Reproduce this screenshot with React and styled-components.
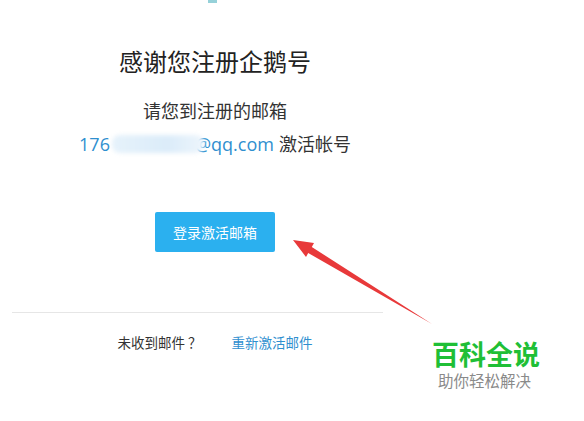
import React from "react"
import styled, { createGlobalStyle } from "styled-components"

const GlobalStyle = createGlobalStyle`
  html, body {
    margin: 0;
    padding: 0;
    background: #ffffff;
  }
  body {
    font-family: "Open Sans", "Noto Sans CJK SC", sans-serif;
    color: #333333;
  }
`

const Page = styled.div`
  position: relative;
  width: 584px;
  height: 421px;
  overflow: hidden;
  background: #ffffff;
`

const TopMark = styled.div`
  width: 9px;
  height: 3px;
  margin-left: 208px;
  background: #7cc6cf;
  opacity: 0.8;
`

const Column = styled.div`
  width: 430px;
  display: flex;
  flex-direction: column;
  align-items: center;
`

const Title = styled.h1`
  margin: 42px 0 0;
  font-family: "Noto Sans CJK SC", sans-serif;
  font-weight: 400;
  font-size: 24px;
  line-height: 32px;
  color: #222222;
`

const Subtitle = styled.p`
  margin: 20px 0 0;
  font-family: "Noto Sans CJK SC", sans-serif;
  font-size: 18px;
  line-height: 26px;
  color: #333333;
`

const EmailLine = styled.p`
  margin: 7px 0 0;
  font-size: 18px;
  line-height: 26px;
  color: #333333;
  white-space: nowrap;
`

const Email = styled.span`
  color: #2f8fcf;
  font-family: "Open Sans", sans-serif;
`

const Blur = styled.span`
  position: relative;
  z-index: 1;
  display: inline-block;
  width: 92px;
  height: 18px;
  margin: 0 -9px 0 2px;
  vertical-align: -2px;
  border-radius: 8px;
  background: linear-gradient(90deg, #e6f2fb, #dbecf9 60%, #edf5fc);
  filter: blur(2px);
`

const Action = styled.span`
  font-family: "Noto Sans CJK SC", sans-serif;
  margin-left: 5px;
`

const Button = styled.button`
  margin-top: 55px;
  width: 120px;
  height: 40px;
  border: none;
  border-radius: 2px;
  background: #2bb0ef;
  color: #ffffff;
  font-family: "Noto Sans CJK SC", sans-serif;
  font-size: 14px;
  cursor: pointer;
`

const Divider = styled.hr`
  align-self: stretch;
  margin: 60px 0 0 12px;
  border: none;
  border-top: 1px solid #e6e6e6;
`

const Footer = styled.div`
  margin-top: 19px;
  display: flex;
  gap: 30px;
  font-family: "Noto Sans CJK SC", sans-serif;
  font-size: 13.5px;
  line-height: 20px;
`

const FooterText = styled.span`
  color: ${({ link }) => (link ? "#2f8fcf" : "#333333")};
`

const Watermark = styled.div`
  position: absolute;
  left: 383px;
  top: 305px;
  width: 132px;
  height: 95px;
  background: #ffffff;
  box-sizing: border-box;
  padding: 35px 0 0 49px;
  font-family: "Noto Sans CJK SC", sans-serif;
`

const Brand = styled.div`
  font-size: 27px;
  font-weight: 700;
  line-height: 27px;
  color: #1fbf36;
  white-space: nowrap;
`

const Slogan = styled.div`
  font-size: 15.5px;
  line-height: 18px;
  margin-top: 4px;
  color: #8a8a8a;
  white-space: nowrap;
  margin-left: 6px;
`

const Arrow = styled.svg`
  position: absolute;
  left: 0;
  top: 0;
  pointer-events: none;
`

export default function App() {
  return (
    <Page>
      <GlobalStyle />
      <TopMark />
      <Column>
        <Title>感谢您注册企鹅号</Title>
        <Subtitle>请您到注册的邮箱</Subtitle>
        <EmailLine>
          <Email>
            176
            <Blur />
            @qq.com
          </Email>
          <Action>激活帐号</Action>
        </EmailLine>
        <Button>登录激活邮箱</Button>
        <Divider />
        <Footer>
          <FooterText>未收到邮件 ？</FooterText>
          <FooterText link>重新激活邮件</FooterText>
        </Footer>
      </Column>
      <Watermark>
        <Brand>百科全说</Brand>
        <Slogan>助你轻松解决</Slogan>
      </Watermark>
      <Arrow width="584" height="421" viewBox="0 0 584 421">
        <polygon
          points="293,240 314,243 311.8,247 432,324 308.2,253 306,257"
          fill="#e8393a"
        />
      </Arrow>
    </Page>
  )
}
